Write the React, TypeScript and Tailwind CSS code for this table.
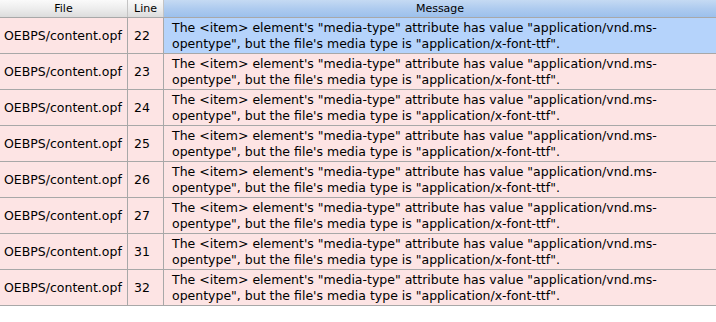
import React from "react";

const rows = [
  { file: "OEBPS/content.opf", line: 22, selected: true },
  { file: "OEBPS/content.opf", line: 23 },
  { file: "OEBPS/content.opf", line: 24 },
  { file: "OEBPS/content.opf", line: 25 },
  { file: "OEBPS/content.opf", line: 26 },
  { file: "OEBPS/content.opf", line: 27 },
  { file: "OEBPS/content.opf", line: 31 },
  { file: "OEBPS/content.opf", line: 32 },
];

export default function App() {
  return (
    <div
      className="w-[716px] h-[322px] bg-white text-black overflow-hidden"
      style={{ fontFamily: '"DejaVu Sans", "Lucida Grande", sans-serif' }}
    >
      {/* Header */}
      <div className="flex h-[18px] border-b border-[#a8a8a8] text-[11px] leading-[17px]">
        <div className="w-[128px] border-r border-[#c4c4c4] bg-gradient-to-b from-[#fafafa] via-[#ededed] to-[#dcdcdc] text-center">
          File
        </div>
        <div className="w-[36px] border-r border-[#c4c4c4] bg-gradient-to-b from-[#fafafa] via-[#ededed] to-[#dcdcdc] text-center">
          Line
        </div>
        <div className="flex-1 bg-gradient-to-b from-[#c5daf3] via-[#aecbef] to-[#9cc0ec] text-center">
          Message
        </div>
      </div>

      {/* Rows */}
      {rows.map((r) => (
        <div
          key={r.line}
          className="flex h-[36px] border-b border-[#a8a8a8] bg-[#fde4e4] text-[12.5px] leading-[16px]"
        >
          <div className="w-[128px] border-r border-[#a8a8a8] flex items-center pl-[4px] whitespace-nowrap">
            {r.file}
          </div>
          <div className="w-[36px] border-r border-[#a8a8a8] flex items-center pl-[6px]">
            {r.line}
          </div>
          <div
            className={`flex-1 flex flex-col justify-center pl-[8px] whitespace-nowrap ${
              r.selected ? "bg-[#b5d3fb]" : ""
            }`}
          >
            <span>The &lt;item&gt; element's "media-type" attribute has value "application/vnd.ms-</span>
            <span>opentype", but the file's media type is "application/x-font-ttf".</span>
          </div>
        </div>
      ))}
    </div>
  );
}
